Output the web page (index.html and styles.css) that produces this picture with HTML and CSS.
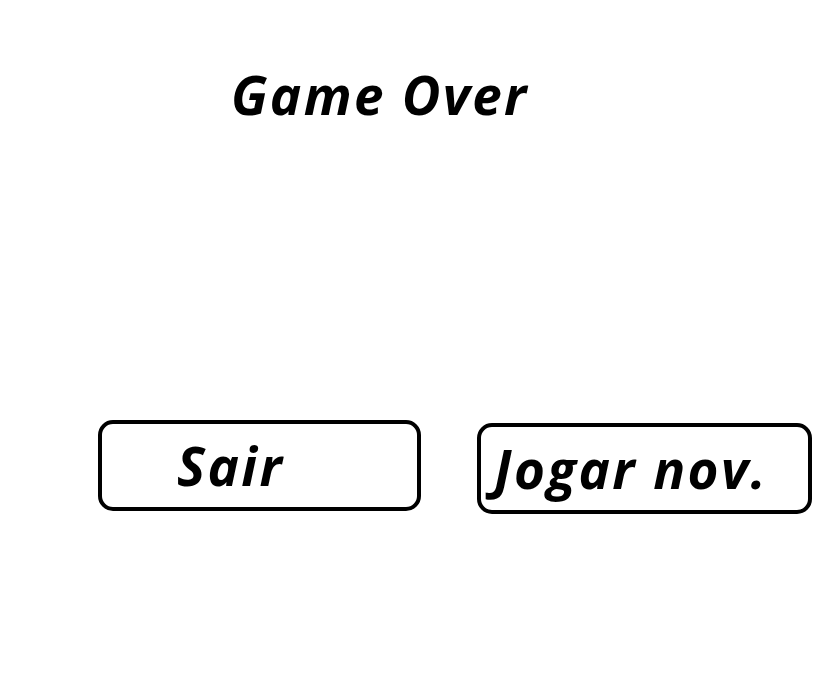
FILE: index.html
```html
<!DOCTYPE html>
<html lang="pt">
<head>
<meta charset="utf-8">
<title>Game Over</title>
<link rel="stylesheet" href="styles.css">
</head>
<body>
<main class="screen">
  <h1 class="title">Game Over</h1>
  <div class="actions">
    <button class="btn btn-quit" type="button">Sair</button>
    <button class="btn btn-retry" type="button">Jogar nov.</button>
  </div>
</main>
</body>
</html>
```
FILE: styles.css
```css
html, body {
  margin: 0;
  padding: 0;
  background: #fff;
}
.screen {
  width: 839px;
  height: 685px;
  font-family: "Open Sans", "Liberation Sans", sans-serif;
  font-weight: 700;
  font-style: italic;
  color: #000;
}
.title {
  margin: 0;
  padding: 61px 0 0 231px;
  font-size: 53px;
  line-height: 68px;
  font-weight: 700;
  font-style: italic;
  letter-spacing: 2.3px;
}
.actions {
  display: flex;
  align-items: flex-start;
  gap: 56px;
  padding: 291px 0 0 98px;
}
.btn {
  box-sizing: border-box;
  background: #fff;
  border: 4.5px solid #000;
  border-radius: 15px;
  font: inherit;
  font-size: 53px;
  letter-spacing: 2.4px;
  color: #000;
  text-align: left;
  padding: 0;
  line-height: 1;
}
.btn-quit {
  width: 323px;
  height: 91px;
  padding-left: 75px;
}
.btn-retry {
  width: 335px;
  height: 91px;
  margin-top: 3px;
  padding-left: 13px;
}
```
